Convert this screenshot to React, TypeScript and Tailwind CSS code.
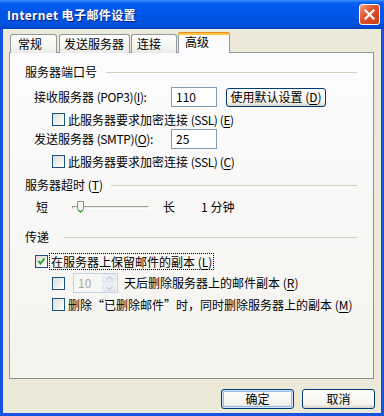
import React from 'react'

const font = "font-['Noto_Sans_CJK_SC','Noto_Sans',sans-serif]"

function Check({ checked }: { checked?: boolean }) {
  return (
    <span className="w-[13px] h-[13px] shrink-0 border border-[#1c5180] bg-[linear-gradient(135deg,#dcdcd7,#ffffff)] flex items-center justify-center">
      {checked && (
        <svg width="9" height="9" viewBox="0 0 9 9">
          <polyline points="1.5,4 3.5,6.5 7.5,1.5" fill="none" stroke="#21a121" strokeWidth="2" />
        </svg>
      )}
    </span>
  )
}

function Key({ k }: { k: string }) {
  return (
    <>
      (<span className="underline underline-offset-2">{k}</span>)
    </>
  )
}

function XpButton({ children, def, className }: { children: React.ReactNode; def?: boolean; className?: string }) {
  return (
    <button
      className={`border border-[#003c74] rounded-[3px] bg-[linear-gradient(to_bottom,#ffffff,#f3f2ec_80%,#d6d0c5)] flex items-center justify-center text-[12px] leading-none text-black ${def ? 'shadow-[inset_0_0_0_1px_#cee7ff,inset_0_0_0_2px_#98b8ea]' : ''} ${className ?? ''}`}
    >
      {children}
    </button>
  )
}

function Group({ title, gap }: { title: React.ReactNode; gap: string }) {
  return (
    <div className="h-[16px] flex items-center pr-[16px]">
      <span className="leading-none whitespace-nowrap">{title}</span>
      <div className={`flex-1 h-px bg-[#d0d0bf] ${gap}`} />
    </div>
  )
}

export default function App() {
  return (
    <div className={`w-[384px] h-[416px] flex flex-col ${font} text-[12px] text-black select-none`}>
      {/* title bar */}
      <div className="h-[29px] flex items-center bg-[linear-gradient(to_bottom,#3d95ff_0%,#0a5ff0_10%,#0058ee_25%,#0054e3_60%,#0050dc_88%,#0041c4_100%)]">
        <span className="pl-[7px] pt-[1px] text-white font-bold text-[12px] tracking-[0.4px] whitespace-nowrap [text-shadow:1px_1px_0_#0a1e8c]">
          Internet 电子邮件设置
        </span>
        <div className="ml-auto mr-[4px] w-[21px] h-[21px] rounded-[3px] border border-white bg-[linear-gradient(135deg,#f0a080,#e2552b_40%,#c73a12)] flex items-center justify-center">
          <svg width="11" height="11" viewBox="0 0 11 11">
            <path d="M1.5 1.5 L9.5 9.5 M9.5 1.5 L1.5 9.5" stroke="#ffffff" strokeWidth="2.2" strokeLinecap="square" />
          </svg>
        </div>
      </div>

      {/* body */}
      <div className="flex-1 flex flex-col bg-[#ece9d8] border-x-[3px] border-b-[3px] border-[#1653e0]">
        {/* tabs */}
        <div className="pt-[3px] pl-[6px] flex items-end h-[24px] -mb-px relative z-10">
          <div className="ml-[1px] w-[47px] h-[19px] rounded-t-[3px] border border-b-0 border-[#919b9c] bg-[linear-gradient(to_bottom,#ffffff,#f3f3ef_70%,#ecebe6)] pl-[7px] pt-[3px] leading-none">
            常规
          </div>
          <div className="ml-[2px] w-[71px] h-[19px] rounded-t-[3px] border border-b-0 border-[#919b9c] bg-[linear-gradient(to_bottom,#ffffff,#f3f3ef_70%,#ecebe6)] pl-[4px] pt-[3px] leading-none">
            发送服务器
          </div>
          <div className="ml-[1px] w-[46px] h-[19px] rounded-t-[3px] border border-b-0 border-[#919b9c] bg-[linear-gradient(to_bottom,#ffffff,#f3f3ef_70%,#ecebe6)] pl-[5px] pt-[3px] leading-none">
            连接
          </div>
          <div className="ml-[1px] w-[52px] h-[21px] rounded-t-[3px] border-x border-[#919b9c] bg-[#fcfcfe] flex flex-col">
            <div className="-mx-px h-[3px] rounded-t-[3px] border-t border-[#e68b2c] bg-[#ffc83c]" />
            <span className="pl-[6px] pt-[1px] leading-none">高级</span>
          </div>
        </div>

        {/* panel */}
        <div className="ml-[6px] w-[365px] h-[327px] border border-[#919b9c] border-r-[#8a9193] border-b-[#8a9193] bg-[linear-gradient(to_bottom,#fcfcfe,#f4f3ee)] flex flex-col pl-[15px]">
          <div className="mt-[11px]">
            <Group title="服务器端口号" gap="ml-[9px]" />
          </div>

          <div className="mt-[7px] h-[20px] flex items-center pl-[9px]">
            <span className="w-[137px] leading-none whitespace-nowrap">
              接收服务器 <span className="tracking-[-0.4px]">(POP3)<Key k="I" />:</span>
            </span>
            <div className="w-[46px] h-[20px] border border-[#7f9db9] bg-white pl-[4px] flex items-center leading-none">110</div>
            <XpButton className="ml-[9px] w-[100px] h-[19px]">
              使用默认设置 <Key k="D" />
            </XpButton>
          </div>

          <div className="mt-[6px] h-[13px] flex items-center pl-[27px]">
            <Check />
            <span className="ml-[3px] leading-none whitespace-nowrap">
              此服务器要求加密连接 <span className="tracking-[-0.4px]">(SSL) <Key k="E" /></span>
            </span>
          </div>

          <div className="mt-[3px] h-[20px] flex items-center pl-[9px]">
            <span className="w-[137px] leading-none whitespace-nowrap">
              发送服务器 <span className="tracking-[-0.4px]">(SMTP)<Key k="O" />:</span>
            </span>
            <div className="w-[46px] h-[20px] border border-[#7f9db9] bg-white pl-[4px] flex items-center leading-none">25</div>
          </div>

          <div className="mt-[6px] h-[13px] flex items-center pl-[27px]">
            <Check />
            <span className="ml-[3px] leading-none whitespace-nowrap">
              此服务器要求加密连接 <span className="tracking-[-0.4px]">(SSL) <Key k="C" /></span>
            </span>
          </div>

          <div className="mt-[9px]">
            <Group
              title={
                <>
                  服务器超时 <Key k="T" />
                </>
              }
              gap="ml-[8px]"
            />
          </div>

          <div className="mt-[6px] h-[16px] flex items-center pl-[11px]">
            <span className="leading-none">短</span>
            <div className="ml-[24px] w-[77px] h-[16px] flex items-center relative">
              <div className="w-full h-[3px] rounded-[1px] border-t border-l border-[#9d9c99] border-b border-b-white border-r border-r-white bg-[#ecebe6]" />
              <svg className="absolute left-[5px] top-[2px]" width="7" height="12" viewBox="0 0 7 12">
                <path d="M0.5 0.5 H6.5 V8.5 L3.5 11.5 L0.5 8.5 Z" fill="#f5f5f1" stroke="#8e8f8f" />
                <path d="M1 9 L3.5 11 L6 9" fill="none" stroke="#21a121" strokeWidth="1.2" />
              </svg>
            </div>
            <span className="ml-[14px] leading-none">长</span>
            <span className="ml-[26px] leading-none whitespace-nowrap">1 分钟</span>
          </div>

          <div className="mt-[14px]">
            <Group title="传递" gap="ml-[15px]" />
          </div>

          <div className="mt-[8px] h-[17px] flex items-center pl-[10px]">
            <Check checked />
            <span className="ml-[1px] h-[17px] px-[1px] border border-dotted border-black flex items-center leading-none whitespace-nowrap">
              在服务器上保留邮件的副本 <Key k="L" />
            </span>
          </div>

          <div className="mt-[3px] h-[20px] flex items-center pl-[27px]">
            <Check />
            <div className="ml-[8px] w-[45px] h-[20px] border border-[#c3d0e8] bg-[#f7f7f3] flex items-center">
              <span className="flex-1 pl-[4px] leading-none text-[#aca899]">10</span>
              <div className="w-[15px] h-[18px] flex flex-col gap-px pr-px">
                <div className="flex-1 rounded-[2px] bg-[linear-gradient(to_bottom,#f4f6fa,#dfe5ee)] border border-[#e1e6ef] flex items-center justify-center">
                  <svg width="7" height="4" viewBox="0 0 7 4"><path d="M0.5 3.5 L3.5 0.5 L6.5 3.5" fill="none" stroke="#c6cbd3" strokeWidth="1.3" /></svg>
                </div>
                <div className="flex-1 rounded-[2px] bg-[linear-gradient(to_bottom,#f4f6fa,#dfe5ee)] border border-[#e1e6ef] flex items-center justify-center">
                  <svg width="7" height="4" viewBox="0 0 7 4"><path d="M0.5 0.5 L3.5 3.5 L6.5 0.5" fill="none" stroke="#c6cbd3" strokeWidth="1.3" /></svg>
                </div>
              </div>
            </div>
            <span className="ml-[6px] leading-none whitespace-nowrap">
              天后删除服务器上的邮件副本 <Key k="R" />
            </span>
          </div>

          <div className="mt-[5px] h-[13px] flex items-center pl-[27px]">
            <Check />
            <span className="ml-[3px] leading-none whitespace-nowrap">
              删除“已删除邮件”时，同时删除服务器上的副本 <Key k="M" />
            </span>
          </div>
        </div>

        {/* bottom buttons */}
        <div className="mt-[10px] flex justify-end pr-[6px] gap-[8px]">
          <XpButton def className="w-[73px] h-[20px]">
            确定
          </XpButton>
          <XpButton className="w-[73px] h-[20px]">取消</XpButton>
        </div>
      </div>
    </div>
  )
}
